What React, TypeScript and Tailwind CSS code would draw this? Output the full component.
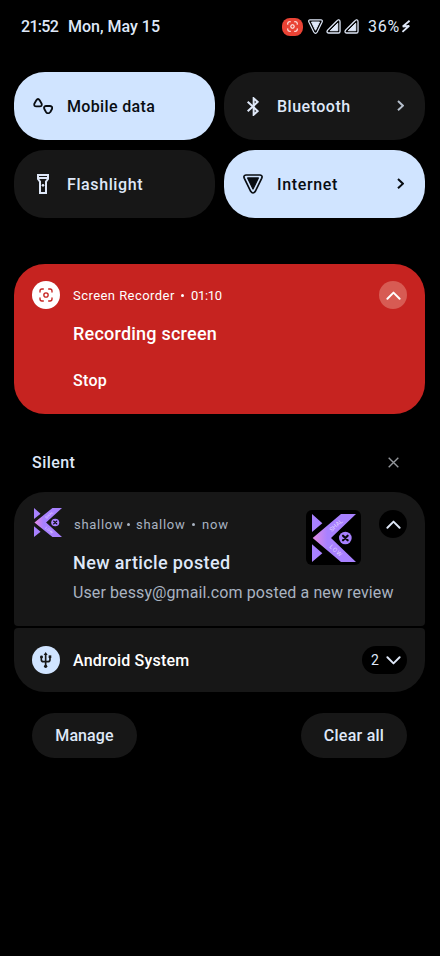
import React from "react";

type IconProps = { className?: string };

function RecordGlyph({ className = "" }: IconProps) {
  return (
    <svg viewBox="0 0 42 42" className={className} fill="none" stroke="currentColor" strokeWidth="4" strokeLinecap="round">
      <path d="M3 12V9Q3 3 9 3h4M29 3h4Q39 3 39 9v3M39 30v3Q39 39 33 39h-4M13 39H9Q3 39 3 33v-3" />
      <circle cx="21" cy="21" r="6.500" />
    </svg>
  );
}

function WifiTriangle({ className = "" }: IconProps) {
  return (
    <svg viewBox="0 0 60 60" className={className}>
      <path d="M9 3H51Q60 4 56 13L37 52Q30 62 23 52L4 13Q0 4 9 3Z" fill="none" stroke="currentColor" strokeWidth="5" />
      <path d="M14 12H46L30 45Z" fill="currentColor" stroke="currentColor" strokeWidth="4" strokeLinejoin="round" />
    </svg>
  );
}

function Signal({ className = "" }: IconProps) {
  return (
    <svg viewBox="0 0 46 46" className={className}>
      <path d="M37 3Q43 1 43 9V38Q43 43 38 43H8Q0 42 5 34L33 6Q35 4 37 3Z" fill="none" stroke="currentColor" strokeWidth="4" />
      <path d="M36 13V36H13Z" fill="currentColor" stroke="currentColor" strokeWidth="3" strokeLinejoin="round" />
    </svg>
  );
}

function MobileData() {
  return (
    <svg viewBox="0 0 60 50" className="h-[16.7px] w-5" fill="none" stroke="currentColor" strokeWidth="5.500" strokeLinejoin="round">
      <path d="M10 7Q15 -1 20 7L26 17Q28 25 20 25H10Q2 25 4 17Z" />
      <path d="M39 24H51Q60 25 57 33L52 42Q45 50 39 42L34 33Q31 25 39 24Z" />
    </svg>
  );
}

function Bluetooth() {
  return (
    <svg viewBox="0 0 36 57" className="h-[19px] w-3" fill="none" stroke="currentColor" strokeWidth="6">
      <path d="M2 14L32 42L20 53V4L32 15L2 43" />
    </svg>
  );
}

function Flashlight() {
  return (
    <svg viewBox="0 0 36 60" className="h-5 w-3" fill="none" stroke="currentColor" strokeWidth="6">
      <path d="M3 3H33V15L27 23V57H9V23L3 15Z M3 12H33" />
      <circle cx="18" cy="34" r="4" fill="currentColor" stroke="none" />
    </svg>
  );
}

function Usb() {
  return (
    <svg viewBox="0 0 34 48" className="h-4 w-[11.3px]" fill="none" stroke="currentColor" strokeWidth="5">
      <path d="M17 7V42M4 15V23Q4 29 10 29H24Q30 29 30 23V15" />
      <path d="M17 0L23 9H11Z" fill="currentColor" stroke="none" />
      <circle cx="17" cy="43" r="5" fill="currentColor" stroke="none" />
      <circle cx="4.500" cy="15" r="4.500" fill="currentColor" stroke="none" />
      <path d="M26 10h8v8h-8Z" fill="currentColor" stroke="none" />
    </svg>
  );
}

function Chevron({ className = "" }: IconProps) {
  return (
    <svg viewBox="0 0 46 28" className={`h-[9px] w-[15px] ${className}`} fill="none" stroke="currentColor" strokeWidth="6" strokeLinecap="round" strokeLinejoin="round">
      <path d="M4 24L23 5L42 24" />
    </svg>
  );
}

function ChevronRight({ className = "" }: IconProps) {
  return (
    <svg viewBox="0 0 22 34" className={`h-[11.3px] w-[7.3px] ${className}`} fill="none" stroke="currentColor" strokeWidth="6">
      <path d="M3 3L18 17L3 31" />
    </svg>
  );
}

function Logo({ className = "", id }: IconProps & { id: string }) {
  return (
    <svg viewBox="66 219 132 144" preserveAspectRatio="none" className={className}>
      <defs>
        <linearGradient id={id} x1="68" x2="112" y1="0" y2="0" gradientUnits="userSpaceOnUse">
          <stop offset="0" stopColor="#e58be3" />
          <stop offset="1" stopColor="#a881ff" />
        </linearGradient>
      </defs>
      <path d="M66 219L97 247L66 273ZM66 310L97 337L66 363Z" fill="#a881ff" />
      <path d="M68 291L153 219H198L123 291L198 363H153Z" fill={`url(#${id})`} />
      <circle cx="166" cy="291" r="19" fill="#a881ff" />
      <path d="M159 284L173 298M173 284L159 298" stroke="#09080d" strokeWidth="6.500" strokeLinecap="round" />
      <text transform="translate(125 273) rotate(-42)" fontSize="18" fontFamily="Roboto, sans-serif" fill="#e0d2ff" textLength="46">SHAL</text>
      <text transform="translate(117 319) rotate(42)" fontSize="18" fontFamily="Roboto, sans-serif" fill="#e0d2ff" textLength="43">LOW</text>
    </svg>
  );
}

type TileProps = {
  label: string;
  icon: React.ReactNode;
  active?: boolean;
  chevron?: boolean;
  tracking: string;
};

function Tile({ label, icon, active, chevron, tracking }: TileProps) {
  return (
    <div className={`flex h-[68px] items-center rounded-[31px] pl-[19px] pr-[21px] ${active ? "bg-[#d0e4ff] text-[#090d12]" : "bg-[#171717] text-[#dfe8f8]"}`}>
      <div className="flex w-5 justify-center">{icon}</div>
      <span className={`ml-[14px] flex-1 pt-px text-base font-medium ${tracking}`}>{label}</span>
      {chevron && <ChevronRight className={active ? "" : "text-[#b4bdca]"} />}
    </div>
  );
}

function Dot({ className = "" }: IconProps) {
  return <i className={`size-[3px] rounded-full bg-current ${className}`} />;
}

export default function App() {
  return (
    <div className="h-[956px] w-[440px] overflow-hidden bg-black font-[Roboto,'Noto_Sans',sans-serif] text-[#dfe8f8]">
      <header className="flex h-[53px] items-center pl-[21px] text-base font-medium">
        <span className="w-[47px] pt-px tracking-[-0.7px]">21:52</span>
        <span className="pt-px">Mon, May 15</span>
        <div className="ml-auto flex w-[158px] items-center">
          <div className="flex h-[18px] w-[21px] items-center justify-center rounded-[8px] bg-[#ea4335] text-white">
            <RecordGlyph className="size-[11px]" />
          </div>
          <WifiTriangle className="ml-[5px] size-[15px]" />
          <Signal className="ml-[3px] size-[15px]" />
          <Signal className="ml-[3px] size-[15px]" />
          <span className="ml-[9px] w-[33px] pt-px font-normal tracking-[0.8px]">36%</span>
          <svg viewBox="0 0 28 36" className="h-[13px] w-[10px] shrink-0" fill="none" stroke="currentColor" strokeWidth="5" strokeLinejoin="bevel">
            <path d="M24 2L5 18L23 16L4 33" />
          </svg>
        </div>
      </header>

      <main className="px-[14px]">
        <section className="mt-[19px] grid grid-cols-2 gap-x-[9px] gap-y-[10px] pr-px">
          <Tile label="Mobile data" icon={<MobileData />} active tracking="tracking-[0.35px]" />
          <Tile label="Bluetooth" icon={<Bluetooth />} chevron tracking="tracking-[0.5px]" />
          <Tile label="Flashlight" icon={<Flashlight />} tracking="tracking-[0.6px]" />
          <Tile label="Internet" icon={<WifiTriangle className="size-5" />} active chevron tracking="tracking-[0.65px]" />
        </section>

        <section className="mr-px mt-[46px] h-[150px] rounded-[31px] bg-[#c62320] px-[18px] pt-[17px] text-white">
          <div className="flex h-7 items-center text-[13px]">
            <div className="flex size-7 items-center justify-center rounded-full bg-white text-[#c62320]">
              <RecordGlyph className="size-[14px]" />
            </div>
            <span className="ml-[13px] w-[108px] pt-px tracking-[0.45px]">Screen Recorder</span>
            <Dot />
            <span className="ml-[7px] pt-px tracking-[-0.3px]">01:10</span>
            <div className="ml-auto flex size-7 items-center justify-center rounded-full bg-[#d75b53]">
              <Chevron />
            </div>
          </div>
          <h2 className="mt-[13px] pl-[41px] text-lg font-medium leading-6 tracking-[0.23px]">Recording screen</h2>
          <p className="mt-[22px] pl-[41px] text-base font-medium leading-[25px] tracking-[0.3px]">Stop</p>
        </section>

        <div className="mt-9 flex h-6 items-center justify-between pl-[18px] pr-[27px]">
          <span className="pt-px text-base font-medium tracking-[0.45px]">Silent</span>
          <svg viewBox="0 0 32 32" className="size-[11px] text-[#94979c]" fill="none" stroke="currentColor" strokeWidth="4">
            <path d="M2 2L30 30M30 2L2 30" />
          </svg>
        </div>

        <section className="mr-px mt-[18px] h-[134px] rounded-b-[4px] rounded-t-[31px] bg-[#171717] px-[18px] pt-4">
          <div className="flex h-[57px] items-start">
            <Logo id="logoSmall" className="ml-[2px] h-[29px] w-7" />
            <div className="ml-[12px] flex h-8 items-center pt-px text-[13px] text-[#a9b3c1]">
              <span className="w-[52.5px] tracking-[0.7px]">shallow</span>
              <Dot />
              <span className="ml-[6.500px] w-[56px] tracking-[0.7px]">shallow</span>
              <Dot />
              <span className="ml-[7px] tracking-[0.8px]">now</span>
            </div>
            <div className="ml-auto mr-[18px] mt-[2px] flex size-[55px] items-center justify-center rounded-[6px] bg-black">
              <Logo id="logoLarge" className="h-12 w-11" />
            </div>
            <div className="mt-[2px] flex size-7 items-center justify-center rounded-full bg-black">
              <Chevron />
            </div>
          </div>
          <h2 className="-mt-[15px] pl-[41px] text-lg font-medium leading-[25px] tracking-[0.37px]">New article posted</h2>
          <p className="mt-[6px] whitespace-nowrap pl-[41px] text-base leading-6 tracking-[0.1px] text-[#a9b3c1]">User bessy@gmail.com posted a new review</p>
        </section>

        <section className="mr-px mt-[2px] flex h-16 items-center rounded-b-[31px] rounded-t-[4px] bg-[#171717] px-[18px]">
          <div className="flex size-7 items-center justify-center rounded-full bg-[#d0e4ff] text-[#171717]">
            <Usb />
          </div>
          <span className="ml-[13px] pt-px text-base font-medium tracking-[0.2px] text-white">Android System</span>
          <div className="ml-auto flex h-7 w-[45px] items-center justify-between rounded-full bg-black pl-[9px] pr-[6px] text-sm">
            <span>2</span>
            <Chevron className="rotate-180" />
          </div>
        </section>

        <footer className="mt-[21px] flex justify-between pl-[18px] pr-[19px] text-base font-medium">
          <div className="flex h-[45px] w-[105px] items-center justify-center rounded-full bg-[#171717] pt-px tracking-[0.1px]">Manage</div>
          <div className="flex h-[45px] w-[106px] items-center justify-center rounded-full bg-[#171717] pt-px tracking-[0.25px]">Clear all</div>
        </footer>
      </main>
    </div>
  );
}
